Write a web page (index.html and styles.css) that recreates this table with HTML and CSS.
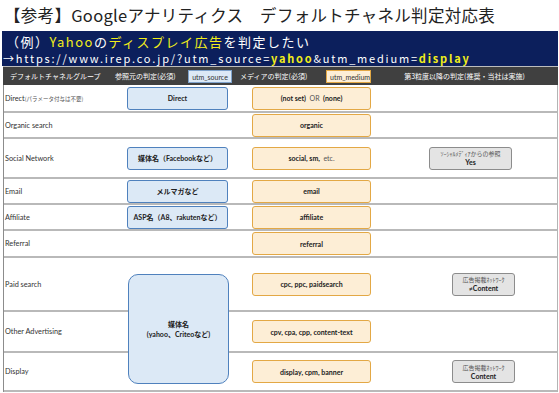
FILE: index.html
```html
<!DOCTYPE html>
<html lang="ja">
<head>
  <meta charset="UTF-8">
  <title>デフォルトチャネル判定対応表</title>
  <link rel="stylesheet" href="styles.css">
</head>
<body>

<div class="sheet">
  <h1 class="title">【参考】Googleアナリティクス　デフォルトチャネル判定対応表</h1>

  <div class="example">
    <div class="example-line">（例）<span class="hl">Yahoo</span>の<span class="hl">ディスプレイ広告</span>を判定したい</div>
    <div class="example-url">→https://www.irep.co.jp/?utm_source=<b class="hl">yahoo</b>&amp;utm_medium=<b class="hl">display</b></div>
  </div>

  <div class="head">
    <span class="head-group">デフォルトチャネルグループ</span>
    <span class="head-src">参照元の判定(必須)</span>
    <span class="tag tag-src">utm_source</span>
    <span class="head-med">メディアの判定(必須)</span>
    <span class="tag tag-med">utm_medium</span>
    <span class="head-extra">第3粒度以降の判定(推奨・当社は実施)</span>
  </div>

  <div class="table">
    <div class="row r28">
      <div class="label">Direct<small>(パラメータ付与は不要)</small></div>
      <div class="cell"><div class="box src">Direct</div></div>
      <div class="cell"><div class="box med">(not set) <span class="plain">&nbsp;OR&nbsp;</span> (none)</div></div>
      <div class="cell"></div>
    </div>
    <div class="row">
      <div class="label">Organic search</div>
      <div class="cell"></div>
      <div class="cell"><div class="box med">organic</div></div>
      <div class="cell"></div>
    </div>
    <div class="row r40">
      <div class="label">Social Network</div>
      <div class="cell"><div class="box src">媒体名（Facebookなど）</div></div>
      <div class="cell"><div class="box med">social, sm, <span class="plain">&nbsp;etc.</span></div></div>
      <div class="cell"><div class="note wide"><small>ｿｰｼｬﾙﾒﾃﾞｨｱからの参照</small>Yes</div></div>
    </div>
    <div class="row">
      <div class="label">Email</div>
      <div class="cell"><div class="box src">メルマガなど</div></div>
      <div class="cell"><div class="box med">email</div></div>
      <div class="cell"></div>
    </div>
    <div class="row">
      <div class="label">Affiliate</div>
      <div class="cell"><div class="box src">ASP名（A8、rakutenなど）</div></div>
      <div class="cell"><div class="box med">affiliate</div></div>
      <div class="cell"></div>
    </div>
    <div class="row r27">
      <div class="label">Referral</div>
      <div class="cell"></div>
      <div class="cell"><div class="box med">referral</div></div>
      <div class="cell"></div>
    </div>

    <div class="paid-group">
      <div class="row r54">
        <div class="label">Paid search</div>
        <div class="cell"></div>
        <div class="cell"><div class="box med">cpc, ppc, paidsearch</div></div>
        <div class="cell"><div class="note"><small>広告掲載ﾈｯﾄﾜｰｸ</small>≠Content</div></div>
      </div>
      <div class="row r41">
        <div class="label">Other Advertising</div>
        <div class="cell"></div>
        <div class="cell"><div class="box med">cpv, cpa, cpp, content-text</div></div>
        <div class="cell"></div>
      </div>
      <div class="row r39 last">
        <div class="label">Display</div>
        <div class="cell"></div>
        <div class="cell"><div class="box med">display, cpm, banner</div></div>
        <div class="cell"><div class="note"><small>広告掲載ﾈｯﾄﾜｰｸ</small>Content</div></div>
      </div>

      <!-- spans the three ad rows -->
      <div class="box src media-box">媒体名<br>(yahoo、Criteoなど)</div>
    </div>
  </div>
</div>

</body>
</html>
```

FILE: styles.css
```css
* {
  box-sizing: border-box;
}

body {
  margin: 0;
  padding: 0;
  background-color: #fff;
  font-family: "Noto Sans CJK JP", sans-serif;
  color: #222;
}

.sheet {
  width: 559px;
}

.title {
  margin: 0;
  height: 31px;
  padding-left: 4px;
  font-size: 16.5px;
  font-weight: normal;
  line-height: 31px;
  letter-spacing: 0.3px;
  color: #222;
}

.example {
  margin: 0 1px 0 2px;
  height: 35px;
  padding-top: 2px;
  background-color: #0c1f5c;
  color: #fff;
}

.example-line {
  height: 18px;
  padding-left: 4px;
  font-size: 13px;
  line-height: 18px;
  letter-spacing: 1.5px;
}

.example-url {
  height: 15px;
  padding-left: 1px;
  font-size: 11px;
  line-height: 15px;
  letter-spacing: 1.8px;
}

.hl {
  color: #f2ee1a;
}

.head {
  display: flex;
  align-items: center;
  margin: 0 1px 0 3px;
  height: 19px;
  border-top: 1px solid #bdbdbd;
  background-color: #404040;
  color: #fff;
  font-size: 7px;
}

.head-group {
  margin-left: 7px;
  width: 105px;
}

.head-src {
  width: 73px;
}

.tag {
  height: 13px;
  padding: 0 3px;
  font-family: Lato, sans-serif;
  font-size: 7px;
  line-height: 12px;
  color: #333;
  text-align: center;
}

.tag-src {
  width: 44px;
  background-color: #dce9f6;
  border: 1px solid #7fa3cc;
}

.tag-med {
  width: 45px;
  background-color: #fdeed6;
  border: 1px solid #e3a845;
}

.head-med {
  margin-left: 8px;
  width: 86px;
}

.head-extra {
  flex: 1;
  text-align: center;
}

.table {
  margin-left: 3px;
  width: 555px;
  border-left: 1px solid #8c8c8c;
  border-right: 1px solid #b4b4b4;
}

.row {
  display: grid;
  grid-template-columns: 123px 125px 119px 1fr;
  align-items: center;
  height: 26px;
  border-bottom: 2px solid #b9b9b9;
}

.row.r27 { height: 27px; }
.row.r28 { height: 28px; }
.row.r39 { height: 39px; }
.row.r40 { height: 40px; }
.row.r41 { height: 41px; }
.row.r54 { height: 54px; }

.label {
  padding-left: 1px;
  font-family: Lato, "Noto Sans CJK JP", sans-serif;
  font-size: 7.3px;
  color: #333;
}

.label small {
  font-family: "Noto Sans CJK JP", sans-serif;
  font-size: 5.5px;
  color: #555;
}

.box {
  display: flex;
  align-items: center;
  justify-content: center;
  height: 23px;
  border-radius: 3px;
  font-family: Lato, "Noto Sans CJK JP", sans-serif;
  font-size: 7px;
  font-weight: bold;
  color: #222;
  white-space: pre;
}

.box.src {
  width: 101px;
  background-color: #dce9f6;
  border: 1px solid #4f81bd;
}

.box.med {
  width: 119px;
  background-color: #fdeed6;
  border: 1px solid #e3a845;
}

.box .plain {
  font-weight: normal;
  color: #555;
}

.paid-group {
  position: relative;
}

.media-box {
  position: absolute;
  left: 124px;
  top: 16px;
  height: 110px;
  flex-direction: column;
  border-radius: 10px;
  line-height: 10px;
  white-space: normal;
  text-align: center;
}

.note {
  display: flex;
  flex-direction: column;
  align-items: center;
  justify-content: center;
  margin-left: 81px;
  width: 63px;
  height: 23px;
  background-color: #e4e4e4;
  border: 1px solid #8c8c8c;
  border-radius: 3px;
  font-family: Lato, sans-serif;
  font-size: 7px;
  font-weight: bold;
  line-height: 9px;
  color: #222;
}

.note.wide {
  margin-left: 58px;
  width: 83px;
}

.note small {
  font-family: "Noto Sans CJK JP", sans-serif;
  font-size: 6px;
  font-weight: normal;
  color: #555;
}
```
